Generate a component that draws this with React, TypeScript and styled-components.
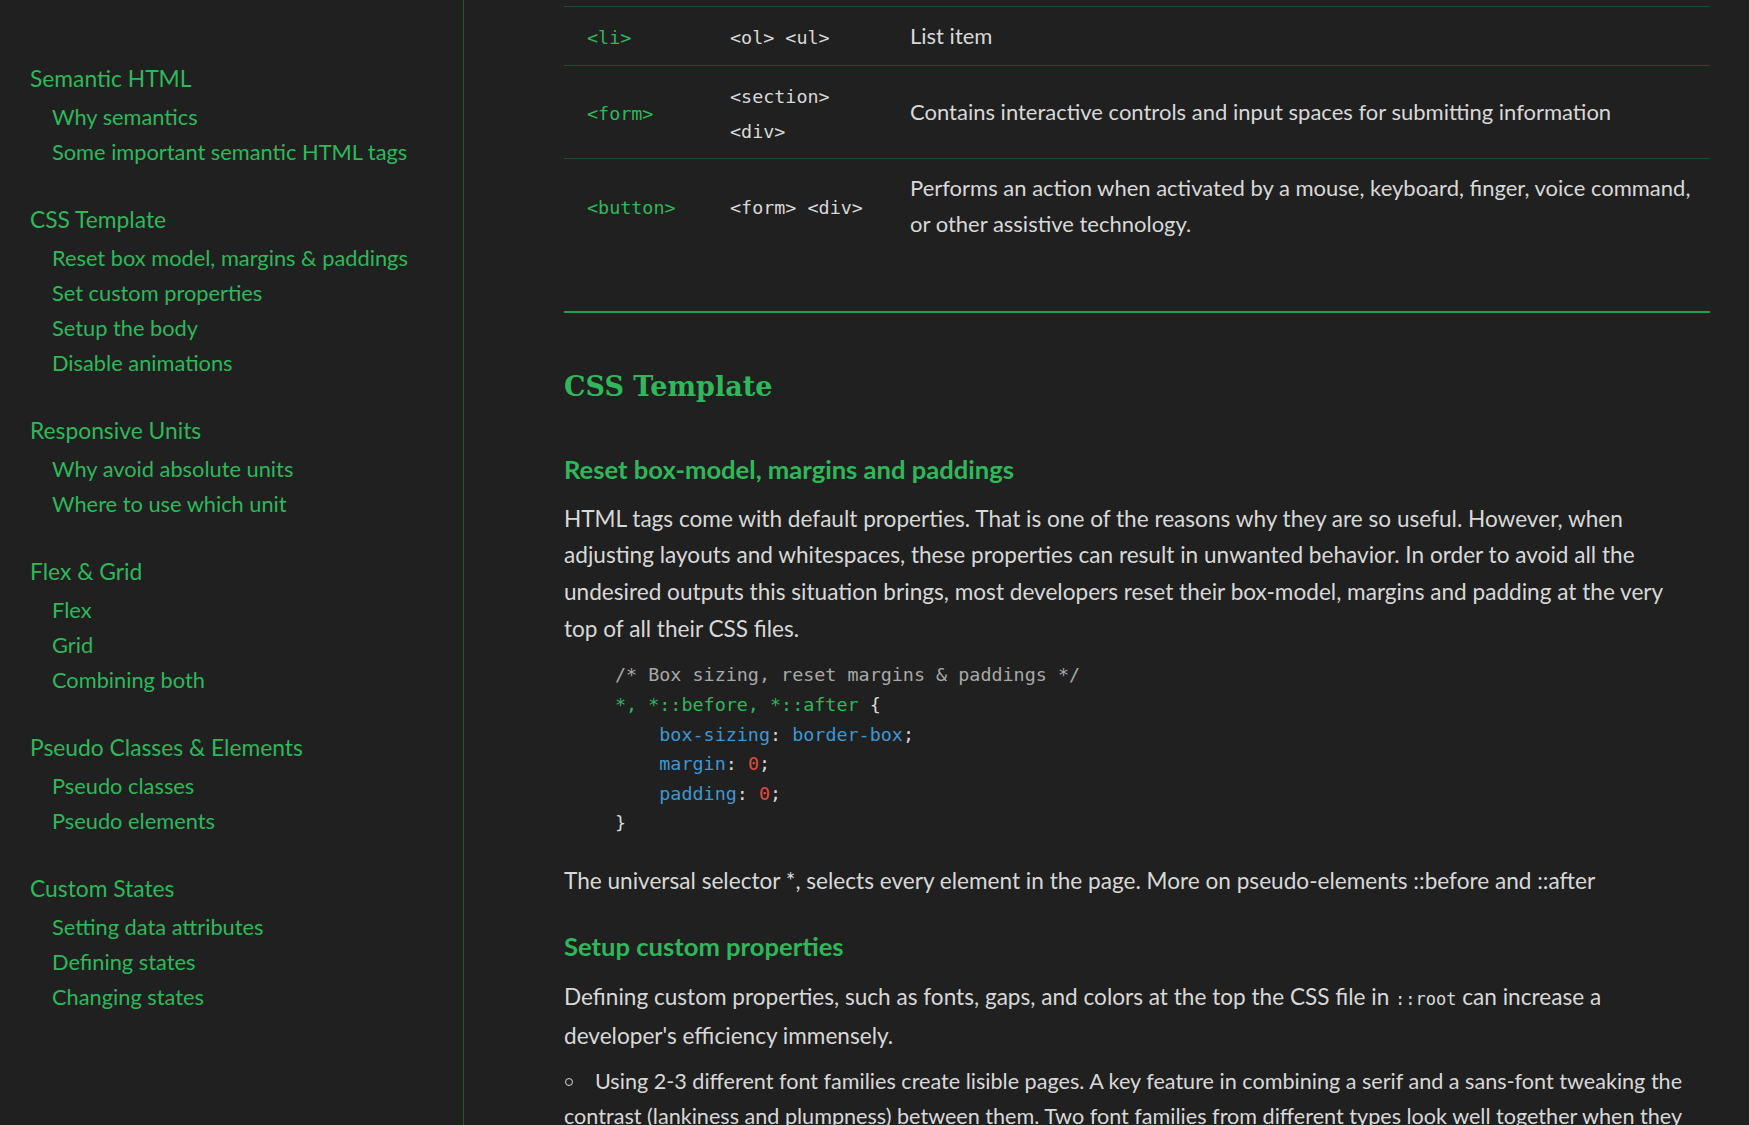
import React from 'react';
import styled, { createGlobalStyle } from 'styled-components';

const GREEN = '#2eb85a';
const TEXT = '#d8d8d8';
const MONO = "'DejaVu Sans Mono', 'Liberation Mono', monospace";

const GlobalStyle = createGlobalStyle`
  *, *::before, *::after {
    box-sizing: border-box;
    margin: 0;
    padding: 0;
  }
  body {
    background: #202020;
    color: ${TEXT};
    font-family: Lato, 'Open Sans', sans-serif;
    overflow: hidden;
  }
`;

const Page = styled.div`
  display: flex;
  height: 1125px;
  overflow: hidden;
`;

const Sidebar = styled.nav`
  flex: 0 0 464px;
  border-right: 1px solid #1f5a2f;
  padding: 60px 0 0 30px;
  display: flex;
  flex-direction: column;
  gap: 32px;
`;

const NavSection = styled.div`
  display: flex;
  flex-direction: column;
  gap: 3px;
`;

const NavHeader = styled.a`
  color: ${GREEN};
  font-size: 22.8px;
  line-height: 36px;
  font-weight: 400;
`;

const NavList = styled.ul`
  list-style: none;
  padding-left: 22px;
`;

const NavItem = styled.li`
  color: ${GREEN};
  font-size: 21.8px;
  line-height: 35px;
`;

const Main = styled.main`
  padding-left: 100px;
  width: 1246px;
`;

const Table = styled.div`
  margin-top: 6px;
  display: grid;
  grid-template-columns: 166px 180px 1fr;
`;

const Cell = styled.div`
  padding: 11px 0;
  border-top: 1px solid #1e4d2b;
  display: flex;
  flex-direction: column;
  justify-content: center;
`;

const MonoCell = styled(Cell)`
  padding: 14px 0 9px;
  font-family: ${MONO};
  font-size: 18.4px;
  line-height: 34.6px;
`;

const TagCell = styled(MonoCell)`
  padding-left: 23px;
  color: ${GREEN};
`;

const ParentCell = styled(MonoCell)`
  color: ${TEXT};
`;

const DescCell = styled(Cell)`
  font-size: 22px;
  line-height: 36px;
`;

const Rule = styled.hr`
  border: none;
  border-top: 2px solid #22a04a;
  margin-top: 58px;
`;

const H2 = styled.h2`
  margin-top: 54px;
  color: ${GREEN};
  font-family: 'DejaVu Serif', 'Liberation Serif', serif;
  font-weight: 700;
  font-size: 27px;
  line-height: 40px;
`;

const H3 = styled.h3<{ $top: number }>`
  margin-top: ${({ $top }) => $top}px;
  color: ${GREEN};
  font-weight: 700;
  font-size: 25.6px;
  line-height: 36px;
`;

const P = styled.p<{ $top: number }>`
  margin-top: ${({ $top }) => $top}px;
  max-width: 1120px;
  font-size: 22.6px;
  line-height: 36.8px;
`;

const Code = styled.pre`
  margin: 12.5px 0 0 51px;
  font-family: ${MONO};
  font-size: 18.4px;
  line-height: 29.6px;
  color: ${TEXT};
`;

const Tok = styled.span<{ $kind: 'comment' | 'sel' | 'prop' | 'num' }>`
  color: ${({ $kind }) =>
    $kind === 'comment'
      ? '#a8a8a8'
      : $kind === 'sel'
        ? GREEN
        : $kind === 'prop'
          ? '#3d97d3'
          : '#e04a3f'};
`;

const InlineCode = styled.code`
  font-family: ${MONO};
  font-size: 17px;
`;

const Bullets = styled.ul`
  margin-top: 9px;
  list-style: none;
  font-size: 21.6px;
  line-height: 35px;
`;

const Bullet = styled.li`
  &::before {
    content: '';
    display: inline-block;
    width: 8px;
    height: 8px;
    border: 1px solid ${TEXT};
    border-radius: 50%;
    margin: 0 22px 3px 1px;
  }
`;

const nav = [
  { title: 'Semantic HTML', items: ['Why semantics', 'Some important semantic HTML tags'] },
  {
    title: 'CSS Template',
    items: ['Reset box model, margins & paddings', 'Set custom properties', 'Setup the body', 'Disable animations'],
  },
  { title: 'Responsive Units', items: ['Why avoid absolute units', 'Where to use which unit'] },
  { title: 'Flex & Grid', items: ['Flex', 'Grid', 'Combining both'] },
  { title: 'Pseudo Classes & Elements', items: ['Pseudo classes', 'Pseudo elements'] },
  { title: 'Custom States', items: ['Setting data attributes', 'Defining states', 'Changing states'] },
];

const rows = [
  { tag: '<li>', parents: ['<ol> <ul>'], desc: ['List item'] },
  {
    tag: '<form>',
    parents: ['<section>', '<div>'],
    desc: ['Contains interactive controls and input spaces for submitting information'],
  },
  {
    tag: '<button>',
    parents: ['<form> <div>'],
    desc: [
      'Performs an action when activated by a mouse, keyboard, finger, voice command,',
      'or other assistive technology.',
    ],
  },
];

export default function App() {
  return (
    <Page>
      <GlobalStyle />
      <Sidebar>
        {nav.map((s) => (
          <NavSection key={s.title}>
            <NavHeader>{s.title}</NavHeader>
            <NavList>
              {s.items.map((i) => (
                <NavItem key={i}>{i}</NavItem>
              ))}
            </NavList>
          </NavSection>
        ))}
      </Sidebar>
      <Main>
        <Table>
          {rows.map((r) => (
            <React.Fragment key={r.tag}>
              <TagCell>{r.tag}</TagCell>
              <ParentCell>
                {r.parents.map((p) => (
                  <span key={p}>{p}</span>
                ))}
              </ParentCell>
              <DescCell>
                {r.desc.map((d) => (
                  <span key={d}>{d}</span>
                ))}
              </DescCell>
            </React.Fragment>
          ))}
        </Table>
        <Rule />
        <H2>CSS Template</H2>
        <H3 $top={43.5}>Reset box-model, margins and paddings</H3>
        <P $top={14}>
          HTML tags come with default properties. That is one of the reasons why they are so useful. However, when
          adjusting layouts and whitespaces, these properties can result in unwanted behavior. In order to avoid all the
          undesired outputs this situation brings, most developers reset their box-model, margins and padding at the very
          top of all their CSS files.
        </P>
        <Code>
          <Tok $kind="comment">/* Box sizing, reset margins &amp; paddings */</Tok>
          {'\n'}
          <Tok $kind="sel">*, *::before, *::after</Tok> {'{\n    '}
          <Tok $kind="prop">box-sizing</Tok>: <Tok $kind="prop">border-box</Tok>;{'\n    '}
          <Tok $kind="prop">margin</Tok>: <Tok $kind="num">0</Tok>;{'\n    '}
          <Tok $kind="prop">padding</Tok>: <Tok $kind="num">0</Tok>;{'\n'}
          {'}'}
        </Code>
        <P $top={25}>
          The universal selector *, selects every element in the page. More on pseudo-elements ::before and ::after
        </P>
        <H3 $top={28.6}>Setup custom properties</H3>
        <P $top={14.6}>
          Defining custom properties, such as fonts, gaps, and colors at the top the CSS file in{' '}
          <InlineCode>::root</InlineCode> can increase a developer's efficiency immensely.
        </P>
        <Bullets>
          <Bullet>
            Using 2-3 different font families create lisible pages. A key feature in combining a serif and a sans-font
            tweaking the contrast (lankiness and plumpness) between them. Two font families from different types look
            well together when they
          </Bullet>
        </Bullets>
      </Main>
    </Page>
  );
}
